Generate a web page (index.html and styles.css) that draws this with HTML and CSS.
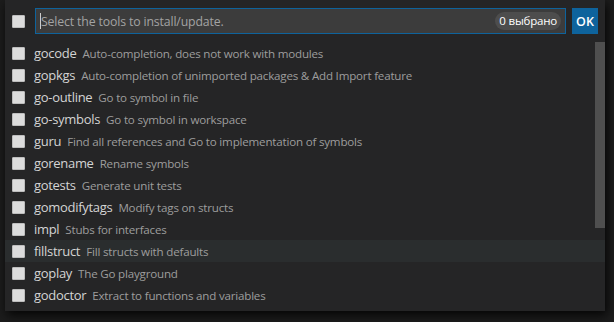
FILE: index.html
```html
<!DOCTYPE html>
<html lang="en">
<head>
    <meta charset="UTF-8">
    <title>Go: Install/Update Tools</title>
    <link rel="stylesheet" href="styles.css">
</head>
<body>
    <div class="picker">
        <div class="picker-header">
            <span class="check"></span>
            <div class="filter">
                <span class="caret"></span>
                <span class="placeholder">Select the tools to install/update.</span>
                <span class="count">0 выбрано</span>
            </div>
            <button class="ok">OK</button>
        </div>
        <ul class="tools">
            <li><span class="check"></span><span class="name">gocode</span><span class="desc">Auto-completion, does not work with modules</span></li>
            <li><span class="check"></span><span class="name">gopkgs</span><span class="desc">Auto-completion of unimported packages &amp; Add Import feature</span></li>
            <li><span class="check"></span><span class="name">go-outline</span><span class="desc">Go to symbol in file</span></li>
            <li><span class="check"></span><span class="name">go-symbols</span><span class="desc">Go to symbol in workspace</span></li>
            <li><span class="check"></span><span class="name">guru</span><span class="desc">Find all references and Go to implementation of symbols</span></li>
            <li><span class="check"></span><span class="name">gorename</span><span class="desc">Rename symbols</span></li>
            <li><span class="check"></span><span class="name">gotests</span><span class="desc">Generate unit tests</span></li>
            <li><span class="check"></span><span class="name">gomodifytags</span><span class="desc">Modify tags on structs</span></li>
            <li><span class="check"></span><span class="name">impl</span><span class="desc">Stubs for interfaces</span></li>
            <li class="hover"><span class="check"></span><span class="name">fillstruct</span><span class="desc">Fill structs with defaults</span></li>
            <li><span class="check"></span><span class="name">goplay</span><span class="desc">The Go playground</span></li>
            <li><span class="check"></span><span class="name">godoctor</span><span class="desc">Extract to functions and variables</span></li>
            <div class="scrollbar"></div>
        </ul>
    </div>
</body>
</html>
```

FILE: styles.css
```css
body {
    margin: 0;
    background-color: #1c1c1c;
    font-family: 'Open Sans', 'Noto Sans', sans-serif;
    font-size: 13px;
    color: #cccccc;
    height: 322px;
    overflow: hidden;
}

.picker {
    width: 600px;
    margin-left: 5px;
    padding-bottom: 5px;
    background-color: #252526;
    box-shadow: 2px 4px 10px rgba(0, 0, 0, 0.85);
}

.picker-header {
    display: flex;
    align-items: center;
    padding: 8px 7px 8px 7px;
    gap: 6px;
}

.check {
    width: 11px;
    height: 11px;
    flex: none;
    background-color: #dcdcdc;
    border: 1px solid #bdbdbd;
    border-radius: 1px;
}

.picker-header .check {
    margin-right: 4px;
}

.filter {
    flex: 1;
    height: 24px;
    display: flex;
    align-items: center;
    background-color: #3c3c3c;
    border: 1px solid #0e639c;
    padding: 0 4px 0 4px;
}

.caret {
    width: 1px;
    height: 16px;
    background-color: #cccccc;
}

.placeholder {
    flex: 1;
    color: #a3a3a3;
    font-size: 12.3px;
    letter-spacing: -0.15px;
}

.count {
    background-color: #4d4d4d;
    color: #ffffff;
    font-size: 11.5px;
    line-height: 18px;
    padding: 0 4px;
    border-radius: 9px;
    letter-spacing: -0.2px;
}

.ok {
    width: 26px;
    height: 26px;
    padding: 0;
    border: none;
    background-color: #0e639c;
    color: #ffffff;
    font-family: 'Open Sans', 'Noto Sans', sans-serif;
    font-size: 12.5px;
    font-weight: 600;
}

.tools {
    list-style: none;
    margin: 0;
    padding: 0;
    position: relative;
}

.tools li {
    display: flex;
    align-items: center;
    height: 22px;
    padding-left: 7px;
    white-space: nowrap;
}

.tools li.hover {
    background-color: #2a2d2e;
}

.tools .check {
    margin-right: 9px;
}

.name {
    color: #d4d4d4;
    font-size: 13px;
    letter-spacing: -0.3px;
    margin-right: 6px;
}

.desc {
    color: #9d9d9d;
    font-size: 11.6px;
    letter-spacing: -0.2px;
}

.scrollbar {
    position: absolute;
    top: 0;
    right: 0;
    width: 10px;
    height: 186px;
    background-color: #4f4f4f;
}
```
